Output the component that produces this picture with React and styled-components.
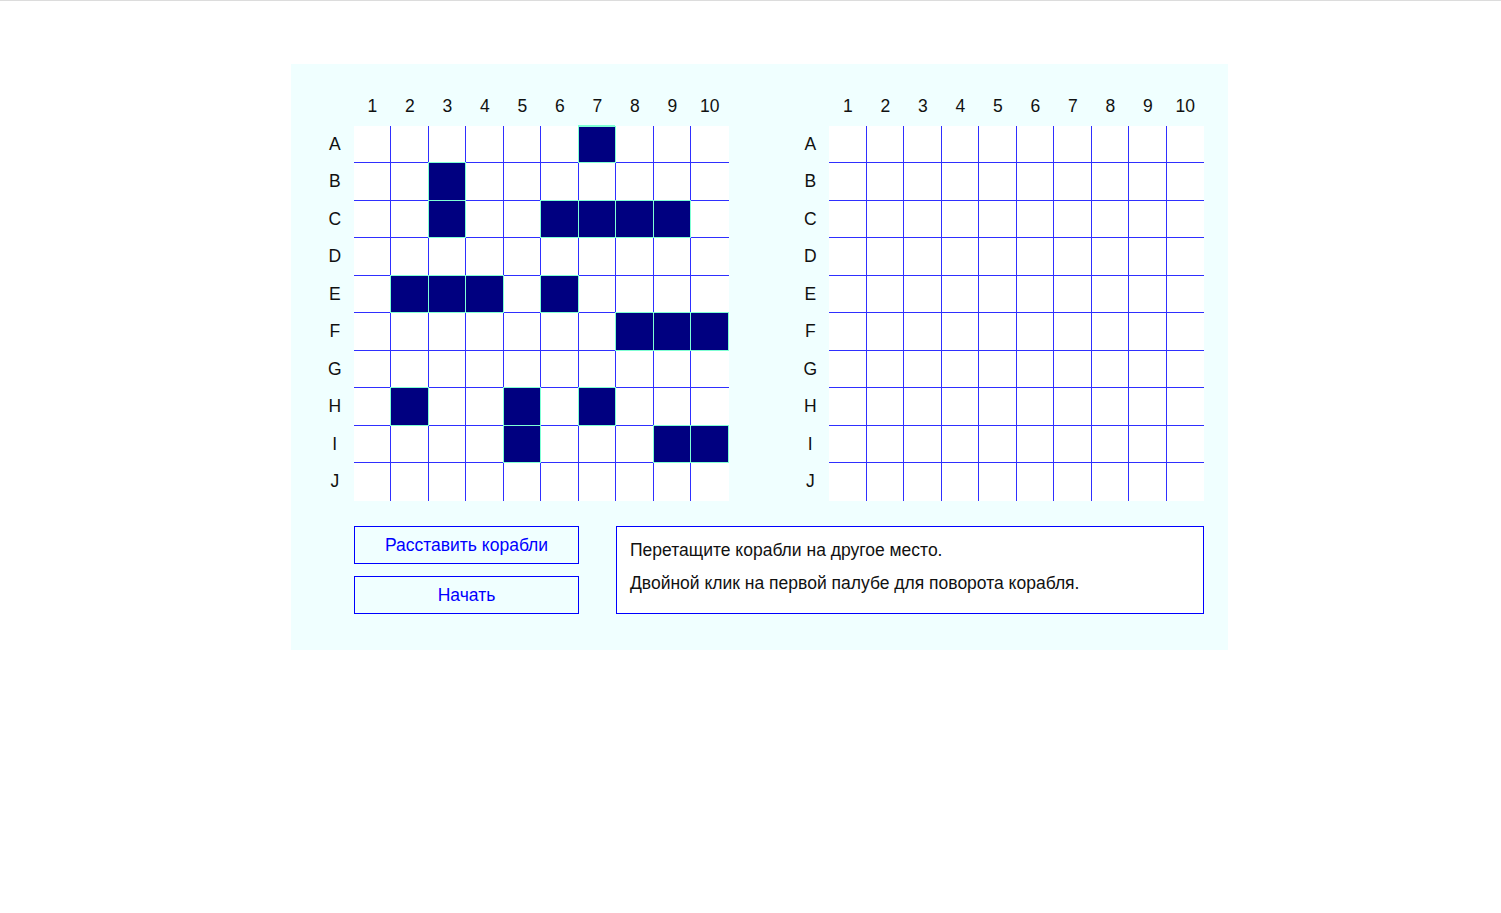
import styled, { createGlobalStyle } from "styled-components";

const GlobalStyle = createGlobalStyle`
  body {
    margin: 0;
    font-family: "Liberation Sans", Arial, sans-serif;
    background: #fff;
  }
`;

const Page = styled.div`
  border-top: 1px solid #dcdcdc;
  min-height: 912px;
`;

const Container = styled.div`
  width: 937px;
  box-sizing: border-box;
  margin: 63px 0 0 291px;
  padding: 23px 24px 36px 25px;
  background: #f0ffff;
`;

const Boards = styled.div`
  display: flex;
  gap: 63px;
`;

const Board = styled.div`
  display: flex;
  flex-direction: column;
`;

const HeaderRow = styled.div`
  display: flex;
  padding: 1px 0 0 37.5px;
`;

const Label = styled.div`
  width: 37.5px;
  height: 37.5px;
  display: flex;
  align-items: center;
  justify-content: center;
  font-size: 17.5px;
  color: #111;
`;

const BoardBody = styled.div`
  display: flex;
`;

const LetterColumn = styled.div`
  display: flex;
  flex-direction: column;
`;

const Field = styled.div`
  display: grid;
  grid-template-columns: repeat(10, 37.5px);
  grid-template-rows: repeat(10, 37.5px);
  background: #fff;
`;

const LINE = "#2f2fff";
const EDGE = "#7fffd4";

const shipShadow = (row, col) => {
  const parts = [];
  parts.push(col > 0 ? `-1px 0 0 ${EDGE}` : `inset 1px 0 0 ${EDGE}`);
  parts.push(row > 0 ? `0 -1px 0 ${EDGE}` : `inset 0 1px 0 ${EDGE}`);
  parts.push(`-1px -1px 0 ${EDGE}`);
  return parts.join(", ");
};

const Cell = styled.div`
  box-sizing: border-box;
  background: ${(p) => (p.$ship ? "#000080" : "#fff")};
  border-right: ${(p) =>
    p.$ship ? `1px solid ${EDGE}` : p.$col < 9 ? `1px solid ${LINE}` : "none"};
  border-bottom: ${(p) =>
    p.$ship ? `1px solid ${EDGE}` : p.$row < 9 ? `1px solid ${LINE}` : "none"};
  box-shadow: ${(p) => (p.$ship ? shipShadow(p.$row, p.$col) : "none")};
`;

const Controls = styled.div`
  display: flex;
  gap: 37px;
  margin-top: 25px;
  padding-left: 38px;
`;

const Buttons = styled.div`
  display: flex;
  flex-direction: column;
  gap: 12px;
`;

const Button = styled.button`
  width: 225px;
  height: 38px;
  padding-top: 2px;
  background: #f0ffff;
  border: 1px solid #0000ff;
  color: #0000ff;
  font-family: "Liberation Sans", Arial, sans-serif;
  font-size: 17.5px;
  cursor: pointer;
`;

const Info = styled.div`
  flex: 1;
  background: #fff;
  border: 1px solid #0000ff;
  padding: 7px 13px 5px;
`;

const InfoLine = styled.p`
  margin: 0;
  line-height: 33px;
  font-size: 17.5px;
  color: #111;
`;

const letters = ["A", "B", "C", "D", "E", "F", "G", "H", "I", "J"];
const numbers = [1, 2, 3, 4, 5, 6, 7, 8, 9, 10];

const ships = [
  "A7",
  "B3", "C3",
  "C6", "C7", "C8", "C9",
  "E2", "E3", "E4",
  "E6",
  "F8", "F9", "F10",
  "H2",
  "H5", "I5",
  "H7",
  "I9", "I10",
];

const GameBoard = ({ occupied = [] }) => (
  <Board>
    <HeaderRow>
      {numbers.map((n) => (
        <Label key={n}>{n}</Label>
      ))}
    </HeaderRow>
    <BoardBody>
      <LetterColumn>
        {letters.map((l) => (
          <Label key={l}>{l}</Label>
        ))}
      </LetterColumn>
      <Field>
        {letters.map((l, r) =>
          numbers.map((n, c) => (
            <Cell
              key={l + n}
              $row={r}
              $col={c}
              $ship={occupied.includes(l + n)}
            />
          ))
        )}
      </Field>
    </BoardBody>
  </Board>
);

const App = () => {
  return (
    <Page>
      <GlobalStyle />
      <Container>
        <Boards>
          <GameBoard occupied={ships} />
          <GameBoard />
        </Boards>
        <Controls>
          <Buttons>
            <Button>Расставить корабли</Button>
            <Button>Начать</Button>
          </Buttons>
          <Info>
            <InfoLine>Перетащите корабли на другое место.</InfoLine>
            <InfoLine>Двойной клик на первой палубе для поворота корабля.</InfoLine>
          </Info>
        </Controls>
      </Container>
    </Page>
  );
};

export default App;
